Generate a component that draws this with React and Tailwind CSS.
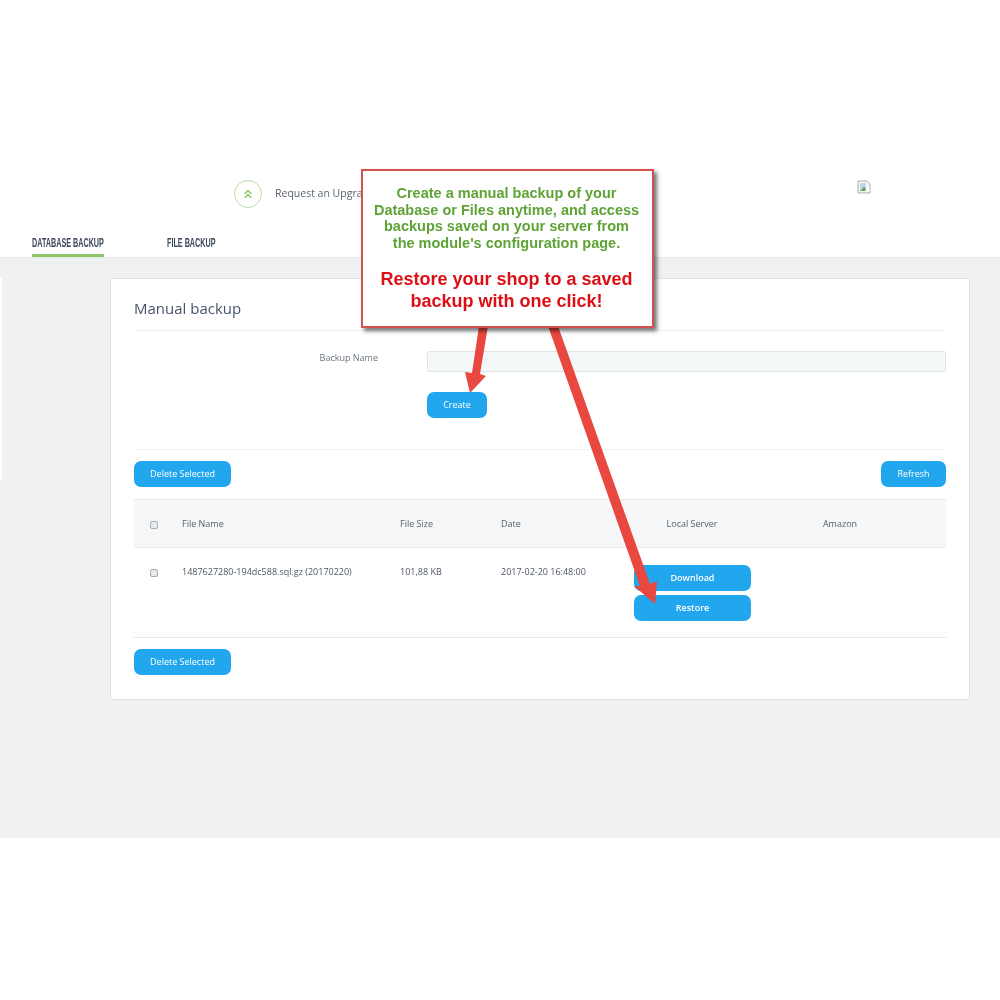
import React from "react";
import { ChevronsUp } from "lucide-react";

function Btn({ className = "", children }) {
  return (
    <div className={"flex items-center justify-center h-[26px] rounded-[7px] bg-[#22a6ee] text-white text-[9px] shrink-0 " + className}>
      {children}
    </div>
  );
}

function Check() {
  return <div className="w-[8px] h-[8px] rounded-[2px] border border-[#a9acb0] bg-[#e9eaec]" />;
}

export default function App() {
  return (
    <div className="relative w-[1000px] h-[1000px] bg-white overflow-hidden flex flex-col blur-[0.4px] font-['Open_Sans',sans-serif] text-[#4a5563]">
      {/* Header */}
      <div className="h-[257px] shrink-0 flex flex-col justify-end">
        <div className="flex items-center h-[28px] mb-[22px] relative">
          <div className="ml-[234px] w-[28px] h-[28px] rounded-full border border-[#b9dca0] flex items-center justify-center text-[#8cc668]">
            <ChevronsUp size={14} strokeWidth={2.5} />
          </div>
          <span className="ml-[13px] text-[10.5px] text-[#5a6675]">Request an Upgrade</span>
          <svg className="ml-[482px] -mt-[14px]" width="14" height="14" viewBox="0 0 14 14">
            <path d="M1 1H10L13 4V13H1Z" fill="#f4f6f8" stroke="#a8adb5" />
            <path d="M3 3H9V8L3 10Z" fill="#c4d4ea" />
            <path d="M3 11L7 7L10 9L9 11Z" fill="#5fa84a" />
            <path d="M10 7L13 10L11 12L8 10Z" fill="#ffffff" />
          </svg>
        </div>
        <div className="flex pl-[32px] h-[27px]">
          <div className="w-[72px] h-[27px] border-b-[3px] border-[#8cc668] pt-[3px]">
            <div className="whitespace-nowrap text-[13px] font-bold text-[#3b4658] font-['Liberation_Sans',sans-serif] origin-left scale-x-[0.555]">DATABASE BACKUP</div>
          </div>
          <div className="ml-[63px] pt-[3px]">
            <div className="whitespace-nowrap text-[13px] font-bold text-[#3b4658] font-['Liberation_Sans',sans-serif] origin-left scale-x-[0.555]">FILE BACKUP</div>
          </div>
        </div>
      </div>

      {/* Gray body */}
      <div className="h-[581px] shrink-0 bg-[#eff1f3] border-t border-[#e6e8ea] flex items-start pt-[20px]">
        <div className="w-[2px] h-[202px] bg-white shrink-0" />
        <div className="ml-[108px] w-[860px] h-[422px] shrink-0 bg-white border border-[#dfe2e5] px-[23px] flex flex-col">
          <div className="h-[52px] shrink-0 border-b border-[#eceef0] flex items-end pb-[11px] text-[15px] text-[#47536a]">Manual backup</div>
          <div className="flex mt-[20px] h-[21px] shrink-0">
            <div className="w-[244px] text-right text-[9px] text-[#6a7480] leading-[12px] pt-[1px]">Backup Name</div>
            <div className="ml-[49px] grow h-[21px] rounded-[2px] bg-[#f5f8f8] border border-[#dfe5e6]" />
          </div>
          <Btn className="ml-[293px] mt-[20px] w-[60px]">Create</Btn>
          <div className="mt-[31px] border-b border-[#eff0f2] shrink-0" />
          <div className="mt-[11px] flex justify-between shrink-0">
            <Btn className="w-[97px]">Delete Selected</Btn>
            <Btn className="w-[65px]">Refresh</Btn>
          </div>
          {/* Table head */}
          <div className="mt-[12px] h-[49px] shrink-0 grid grid-cols-[48px_218px_101px_133px_116px_180px] items-center bg-[#f5f7f8] border-y border-[#e6e9eb] text-[9px] text-[#555f6b]">
            <div className="pl-[16px] pt-[2px]"><Check /></div>
            <div className="pt-[1px]">File Name</div>
            <div className="pt-[1px]">File Size</div>
            <div className="pt-[1px]">Date</div>
            <div className="text-center pt-[1px]">Local Server</div>
            <div className="text-center pt-[1px]">Amazon</div>
          </div>
          {/* Row */}
          <div className="h-[90px] shrink-0 grid grid-cols-[48px_218px_101px_133px_116px_180px] border-b border-[#e6e9eb] text-[9px] text-[#4d5661]">
            <div className="pl-[16px] pt-[21px]"><Check /></div>
            <div className="pt-[17px]">1487627280-194dc588.sql.gz (20170220)</div>
            <div className="pt-[17px]">101,88 KB</div>
            <div className="pt-[17px]">2017-02-20 16:48:00</div>
            <div className="pt-[17px] flex flex-col gap-[4px]">
              <Btn className="w-[117px] font-semibold">Download</Btn>
              <Btn className="w-[117px] font-semibold">Restore</Btn>
            </div>
          </div>
          <Btn className="mt-[11px] w-[97px]">Delete Selected</Btn>
        </div>
      </div>

      {/* Annotation arrows */}
      <svg className="absolute left-0 top-0 pointer-events-none" width="1000" height="1000" viewBox="0 0 1000 1000">
        <polygon points="479,326 488,326 480,374 486,376 470,393 465,372 472,373" fill="#e8483f" />
        <polygon points="548,326 558,326 650,584 657,581 655,604 634,586 640,586" fill="#e8483f" />
      </svg>

      {/* Callout */}
      <div className="absolute left-[361px] top-[169px] w-[293px] h-[159px] bg-white border-[2px] border-[#d4514d] pr-[2px] shadow-[3px_3px_4px_rgba(0,0,0,0.55)] flex flex-col items-center text-center font-['Liberation_Sans',Arial,sans-serif] font-bold">
        <div className="mt-[14px] text-[14.5px] leading-[16.5px] text-[#5fa336] whitespace-nowrap">
          <div>Create a manual backup of your</div>
          <div>Database or Files anytime, and access</div>
          <div>backups saved on your server from</div>
          <div>the module's configuration page.</div>
        </div>
        <div className="mt-[18px] text-[18px] leading-[21.5px] text-[#dc0f16] whitespace-nowrap">
          <div>Restore your shop to a saved</div>
          <div>backup with one click!</div>
        </div>
      </div>
    </div>
  );
}
